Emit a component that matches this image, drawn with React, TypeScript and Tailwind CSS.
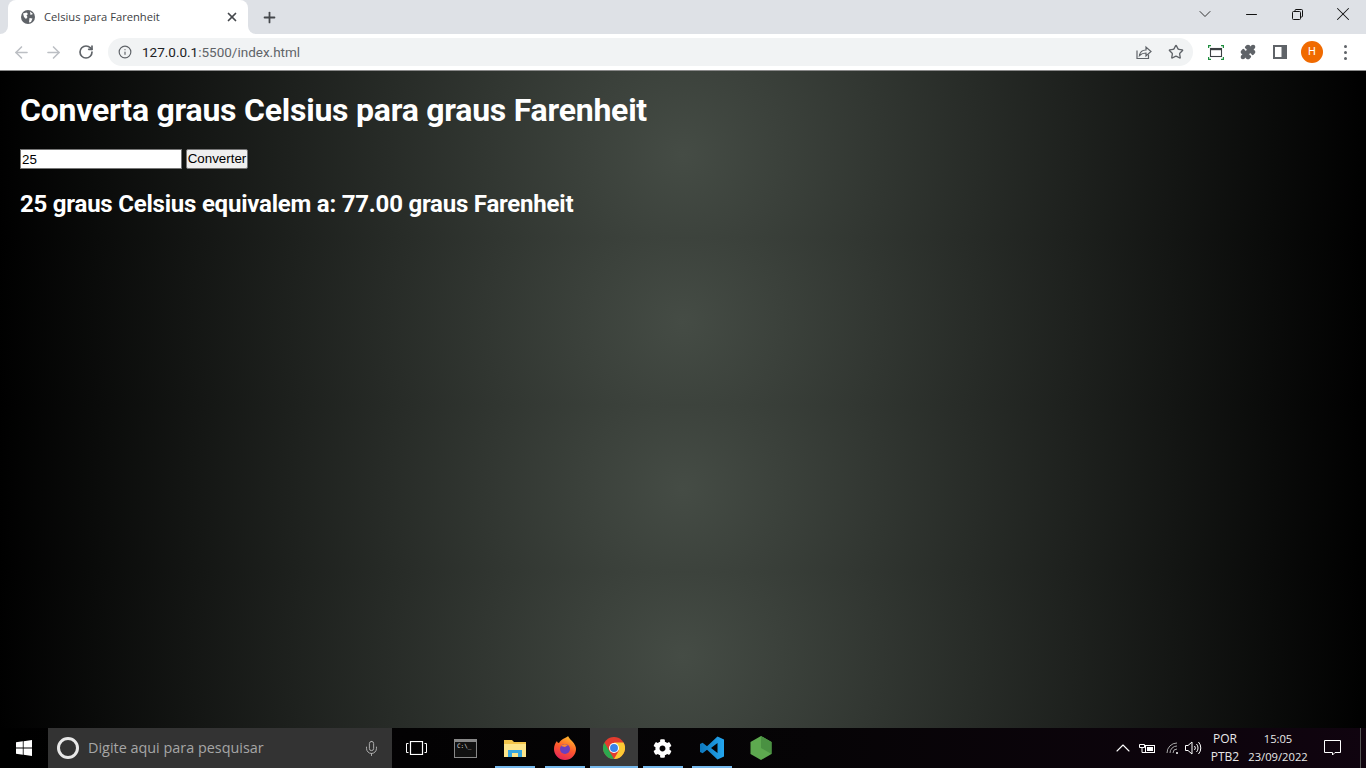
import { ArrowLeft, ArrowRight, RotateCw, Info, Star, Puzzle, X, Plus, ChevronDown, Minus, Mic, ChevronUp } from 'lucide-react';
import { FaCog } from 'react-icons/fa';

function Globe() {
    return (
        <svg width="16" height="16" viewBox="0 0 16 16" className="shrink-0">
            <circle cx="8" cy="8" r="7" fill="#5f6368" />
            <path d="M3 4.5 L6.5 3.5 L8 5 L6.5 6.5 L7.5 8 L6 10 L4 8 Z M9.5 9 L12.5 9.5 L11 13 L9 13.5 Z M10 2.5 L13 5 L10.5 6 Z" fill="#ffffff" />
        </svg>
    );
}

function TabBar() {
    return (
        <div className="h-[34px] bg-[#dee1e6] flex items-end">
            <div className="relative ml-2 w-[240px] h-[34px] bg-white rounded-t-lg flex items-center pl-[12px] pr-[9px]">
                {/* the little flares at the foot of the active tab */}
                <div className="absolute left-[-8px] bottom-0 w-2 h-2 bg-white">
                    <div className="w-2 h-2 bg-[#dee1e6] rounded-br-lg" />
                </div>
                <div className="absolute right-[-8px] bottom-0 w-2 h-2 bg-white">
                    <div className="w-2 h-2 bg-[#dee1e6] rounded-bl-lg" />
                </div>
                <Globe />
                <span className="ml-[8px] flex-1 text-[11.2px] text-[#3c4043] font-['Open_Sans',sans-serif]">Celsius para Farenheit</span>
                <X size={14} strokeWidth={3} className="text-[#45484c]" />
            </div>
            <Plus size={17} strokeWidth={2.5} className="text-[#45484c] ml-[13px] mb-[8px]" />
            <div className="ml-auto flex items-center h-[34px] pb-[6px]">
                <ChevronDown size={20} strokeWidth={1.1} className="text-[#222]" />
                <Minus size={17} strokeWidth={1.6} className="text-[#111] ml-[28px]" />
                <svg width="11" height="11" viewBox="0 0 11 11" fill="none" stroke="#111" className="ml-[32px]">
                    <rect x="0.5" y="2.5" width="8" height="8" rx="1" />
                    <path d="M3 2.5 V1.5 A1 1 0 0 1 4 0.5 H9.5 A1 1 0 0 1 10.5 1.5 V7 A1 1 0 0 1 9.5 8 H8.5" />
                </svg>
                <X size={22} strokeWidth={1.1} className="text-[#111] ml-[29px] mr-[12px]" />
            </div>
        </div>
    );
}

function ToolBar() {
    return (
        <div className="h-[36px] bg-white flex items-center">
            <ArrowLeft size={19} strokeWidth={2} className="text-[#bcbfc4] ml-[12px]" />
            <ArrowRight size={19} strokeWidth={2} className="text-[#bcbfc4] ml-[13px]" />
            <RotateCw size={16} strokeWidth={2.5} className="text-[#5f6368] ml-[15px]" />
            <div className="ml-[14px] w-[1085px] h-[28px] bg-[#f1f3f4] rounded-full flex items-center pl-[10px] pr-[9px]">
                <Info size={14} strokeWidth={2} className="text-[#5f6368]" />
                <span className="ml-[10px] pt-px text-[13.5px] font-['Roboto',sans-serif]">
                    <span className="text-[#202124]">127.0.0.1</span>
                    <span className="text-[#5f6368]">:5500/index.html</span>
                </span>
                <svg width="16" height="16" viewBox="0 0 16 16" fill="none" stroke="#5f6368" strokeWidth="1.2" className="ml-auto mr-[16px]">
                    <path d="M1 6.5 V14.5 H12.5 V10.5" />
                    <path d="M3.5 11.5 C4 8 6.5 6 10 6 V3 L15 7.5 L10 12 V9 C7.5 9 5.5 9.5 3.5 11.5 Z" />
                </svg>
                <Star size={16} strokeWidth={2} className="text-[#5f6368]" />
            </div>
            <svg width="16" height="15" viewBox="0 0 16 15" fill="none" className="ml-[15px]">
                <path d="M0.5 3 V0.5 H3 M13 0.5 H15.5 V3 M15.5 12 V14.5 H13 M3 14.5 H0.5 V12" stroke="#1e8e3e" strokeWidth="1.4" />
                <rect x="2.5" y="3.5" width="11" height="8" stroke="#3c4043" strokeWidth="1.1" />
                <path d="M2.5 4.5 H13.5" stroke="#3c4043" strokeWidth="1.4" />
            </svg>
            <Puzzle size={16} strokeWidth={2} className="text-[#5f6368] fill-[#5f6368] ml-[16px]" />
            <svg width="14" height="14" viewBox="0 0 14 14" className="ml-[17px]">
                <rect x="0" y="0" width="14" height="14" fill="#5f6368" />
                <rect x="2" y="2" width="6.5" height="10" fill="#ffffff" />
            </svg>
            <div className="ml-[14px] w-[22px] h-[22px] rounded-full bg-[#f06a00] flex items-center justify-center text-white text-[11px] font-['Roboto',sans-serif]">H</div>
            <div className="ml-[21px] mr-[19px] flex flex-col gap-[3px]">
                <div className="w-[3px] h-[3px] rounded-full bg-[#5f6368]" />
                <div className="w-[3px] h-[3px] rounded-full bg-[#5f6368]" />
                <div className="w-[3px] h-[3px] rounded-full bg-[#5f6368]" />
            </div>
        </div>
    );
}

function Page() {
    return (
        <main className="flex-1 px-5 font-['Roboto',sans-serif] text-white bg-[radial-gradient(circle,#454c45,#000000)] bg-[length:100%_167px] overflow-hidden">
            <h1 className="text-[32px] leading-[37px] font-bold tracking-[-0.235px] mt-[21px]">Converta graus Celsius para graus Farenheit</h1>
            <div className="mt-[20px] flex items-center h-[20px]">
                <input
                    defaultValue="25"
                    className="w-[162px] h-[20px] bg-white border border-[#767676] px-[1px] text-[13.33px] text-black font-['Liberation_Sans',sans-serif] outline-none"
                />
                <button className="ml-[4px] h-[20px] w-[62px] bg-[#efefef] border border-[#767676] rounded-[2px] text-[13.33px] leading-none text-black font-['Liberation_Sans',sans-serif]">Converter</button>
            </div>
            <h2 className="text-[24px] leading-[28px] font-bold tracking-[-0.22px] mt-[21px]">25 graus Celsius equivalem a: 77.00 graus Farenheit</h2>
        </main>
    );
}

function WindowsLogo() {
    return (
        <svg width="16" height="16" viewBox="0 0 16 16" fill="#ffffff">
            <path d="M0 2.3 L6.8 1.3 V7.6 H0 Z M7.6 1.2 L16 0 V7.6 H7.6 Z M0 8.4 H6.8 V14.7 L0 13.7 Z M7.6 8.4 H16 V16 L7.6 14.8 Z" />
        </svg>
    );
}

function AppSlot({ width, active, open, children }: { width: string; active?: boolean; open?: boolean; children: React.ReactNode }) {
    return (
        <div className={`relative h-[40px] flex items-center justify-center ${width} ${active ? 'bg-[#3a3a3a]' : ''}`}>
            {children}
            {open && <div className={`absolute bottom-0 left-1/2 -translate-x-1/2 h-[2px] bg-[#76b9ed] ${active ? 'w-full' : 'w-[40px]'}`} />}
        </div>
    );
}

function TaskBar() {
    return (
        <footer className="h-[40px] bg-[linear-gradient(to_right,#000000,#060406_60%,#10040f)] flex items-center text-white font-['Open_Sans',sans-serif] overflow-hidden">
            <div className="w-[48px] flex items-center justify-center"><WindowsLogo /></div>
            <div className="w-[344px] h-[40px] bg-[#333333] flex items-center pl-[9px] pr-[12px]">
                <div className="w-[22px] h-[22px] rounded-full border-[3px] border-[#e8e8e8]" />
                <span className="ml-[9px] flex-1 text-[14.4px] text-[#a6a6a6]">Digite aqui para pesquisar</span>
                <Mic size={17} strokeWidth={1.25} className="text-[#bbbbbb]" />
            </div>
            <AppSlot width="w-[49px]">
                <svg width="21" height="14" viewBox="0 0 21 14" fill="none" stroke="#ffffff">
                    <rect x="4.5" y="0.5" width="12" height="13" strokeWidth="1.2" />
                    <path d="M2.5 2.5 H0.5 V11.5 H2.5 M18.5 2.5 H20.5 V11.5 H18.5" strokeWidth="1" />
                </svg>
            </AppSlot>
            <AppSlot width="w-[49px]">
                <div className="w-[23px] h-[19px] bg-[#111] border border-[#888] border-t-[3px] flex items-start px-[2px] text-[6px] leading-[8px] font-['DejaVu_Sans_Mono',monospace] text-[#ddd]">C:\_</div>
            </AppSlot>
            <AppSlot width="w-[49px]" open>
                <svg width="22" height="20" viewBox="0 0 22 20">
                    <path d="M0 2 H8 L10 4 H22 V18 H0 Z" fill="#f3c54b" />
                    <path d="M0 6 H22 V19 H0 Z" fill="#fde58a" />
                    <path d="M4 19 V12 H18 V19 H14 V15 H8 V19 Z" fill="#38a7e0" />
                </svg>
            </AppSlot>
            <AppSlot width="w-[51px]" open>
                <svg width="24" height="24" viewBox="0 0 24 24">
                    <defs>
                        <linearGradient id="ff" x1="0.7" y1="0" x2="0.3" y2="1">
                            <stop offset="0" stopColor="#ffc02c" />
                            <stop offset="0.5" stopColor="#ff5a2c" />
                            <stop offset="1" stopColor="#e3235a" />
                        </linearGradient>
                    </defs>
                    <path d="M12 2 C13 1 15 1 15 0 C16 2 17 3 19 5 C22 8 23 11 23 13 A11 11 0 0 1 1 13 C1 10 2 7 4 5 C4 6 5 7 6 7 C7 5 9 3 12 2 Z" fill="url(#ff)" />
                    <circle cx="12" cy="13" r="5" fill="#6a3fbf" />
                    <path d="M8 10 C10 8 13 8 15 9 L12 11 Z" fill="#ff8a2c" />
                </svg>
            </AppSlot>
            <AppSlot width="w-[48px]" active open>
                <svg width="22" height="22" viewBox="0 0 24 24">
                    <circle cx="12" cy="12" r="12" fill="#e33b2e" />
                    <path d="M12 24 A12 12 0 0 1 1.6 6 L7 15.5 L12 24 Z" fill="#2da94f" />
                    <path d="M12 24 L17.2 15 L12 6 H22.4 A12 12 0 0 1 12 24 Z" fill="#fcc934" />
                    <circle cx="12" cy="12" r="5.5" fill="#ffffff" />
                    <circle cx="12" cy="12" r="4.3" fill="#3b82e8" />
                </svg>
            </AppSlot>
            <AppSlot width="w-[49px]" open>
                <FaCog size={19} className="text-white" />
            </AppSlot>
            <AppSlot width="w-[49px]" open>
                <svg width="24" height="24" viewBox="0 0 24 24">
                    <defs>
                        <linearGradient id="vsc" x1="0" y1="0" x2="1" y2="0">
                            <stop offset="0" stopColor="#0e78bd" />
                            <stop offset="1" stopColor="#24a6ef" />
                        </linearGradient>
                    </defs>
                    <path d="M17.5 0.5 L24 3.5 V20.5 L17.5 23.5 L7 13.8 L2.6 17.2 L0 16 V8 L2.6 6.8 L7 10.2 Z M17.5 7 L11 12 L17.5 17 Z" fill="url(#vsc)" fillRule="evenodd" />
                </svg>
            </AppSlot>
            <AppSlot width="w-[49px]">
                <svg width="22" height="24" viewBox="0 0 22 24">
                    <path d="M11 0 L21.5 6 V18 L11 24 L0.5 18 V6 Z" fill="#5da94f" />
                    <path d="M11 0 L21.5 6 V18 L11 12 Z" fill="#4a9142" />
                </svg>
            </AppSlot>
            <div className="ml-auto flex items-center h-full">
                <ChevronUp size={24} strokeWidth={1.1} className="text-white mr-[4px]" />
                <svg width="16" height="11" viewBox="0 0 16 11" fill="none" stroke="#ffffff" className="mr-[11px]">
                    <rect x="6.5" y="2.5" width="9" height="7" strokeWidth="1" />
                    <rect x="8" y="4" width="6" height="4" fill="#ffffff" stroke="none" />
                    <path d="M0.5 1.5 H5.5 V4.5 H0.5 Z M3 4.5 V9.5 H6.5" strokeWidth="1" />
                </svg>
                <svg width="14" height="14" viewBox="0 0 14 14" fill="none" stroke="#aaaaaa" strokeWidth="1" className="mr-[5px]">
                    <path d="M1 12 A10 10 0 0 1 11 2 M4 12 A7 7 0 0 1 11 5 M7 12 A4 4 0 0 1 11 8" />
                    <circle cx="11" cy="12" r="1" fill="#ffffff" stroke="none" />
                </svg>
                <svg width="17" height="14" viewBox="0 0 17 14" fill="none" stroke="#ffffff" strokeWidth="1" className="mr-[9px]">
                    <path d="M0.5 4.5 H3 L7 1 V13 L3 9.5 H0.5 Z" />
                    <path d="M9.5 5 A3 3 0 0 1 9.5 9 M11.5 3 A6 6 0 0 1 11.5 11 M13.5 1 A9 9 0 0 1 13.5 13" />
                </svg>
                <div className="w-[28px] flex flex-col items-center text-[12px] leading-[18px] text-[#e8e8e8]">
                    <span>POR</span>
                    <span>PTB2</span>
                </div>
                <div className="ml-[9px] w-[60px] flex flex-col items-center text-[11.2px] leading-[18px] text-[#e8e8e8]">
                    <span>15:05</span>
                    <span>23/09/2022</span>
                </div>
                <svg width="17" height="16" viewBox="0 0 17 16" fill="none" stroke="#ffffff" className="ml-[16px]">
                    <path d="M0.5 0.5 H16.5 V12.5 H11 L8.5 15 V12.5 H0.5 Z" />
                </svg>
                <div className="ml-[19px] w-[1px] h-[40px] bg-[#555]" />
                <div className="w-[5px]" />
            </div>
        </footer>
    );
}

export default function App() {
    return (
        <div className="w-[1366px] h-[768px] flex flex-col overflow-hidden">
            <TabBar />
            <ToolBar />
            <div className="h-px bg-[#8a8a8a]" />
            <Page />
            <TaskBar />
        </div>
    );
}
